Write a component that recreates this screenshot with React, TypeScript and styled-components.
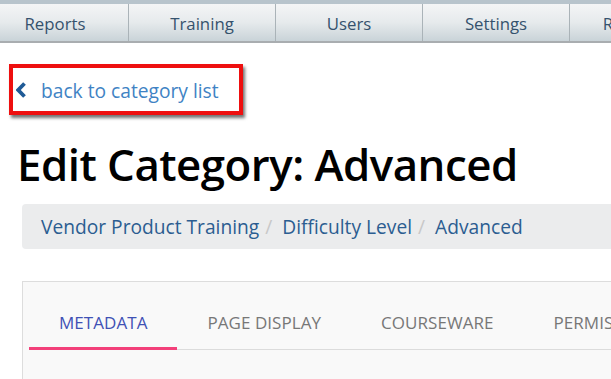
import React from "react";
import styled, { createGlobalStyle } from "styled-components";

const GlobalStyle = createGlobalStyle`
  html, body {
    margin: 0;
    padding: 0;
    background: #ffffff;
    overflow: hidden;
    font-family: "Open Sans", "Noto Sans", sans-serif;
  }
`;

const Page = styled.div`
  width: 611px;
  height: 379px;
  overflow: hidden;
`;

const TopNav = styled.nav`
  display: flex;
  width: 800px;
  margin-left: -18px;
  border-top: 4px solid #b8c4cc;
  border-bottom: 2px solid #a9adb0;
`;

const NavItem = styled.div`
  flex: 0 0 147px;
  height: 37px;
  display: flex;
  align-items: center;
  justify-content: center;
  padding-top: 1px;
  box-sizing: border-box;
  background: linear-gradient(#f4f5f6, #e6eaec 50%, #c9d3d8);
  border-right: 1px solid #aab3b8;
  color: #35526d;
  font-size: 16.8px;
`;

const Content = styled.div`
  padding: 21px 0 0 9px;
`;

const BackBox = styled.div`
  display: inline-flex;
  align-items: center;
  gap: 15px;
  width: 223px;
  height: 43px;
  padding: 0 0 0 3px;
  border: 4px solid #ee0f0f;
  box-shadow: 2px 3px 3px rgba(0, 0, 0, 0.55);
`;

const BackLink = styled.a`
  color: #3f83c4;
  font-size: 19.2px;
  text-decoration: none;
  line-height: 1;
  padding-top: 2px;
`;

const Title = styled.h1`
  margin: 25px 0 0 8px;
  font-size: 43.8px;
  font-weight: 600;
  letter-spacing: -0.5px;
  color: #000;
  line-height: 1.1;
`;

const Breadcrumb = styled.ol`
  display: flex;
  align-items: center;
  list-style: none;
  margin: 16px 0 0 13px;
  padding: 0 0 0 19px;
  width: 700px;
  height: 45px;
  background: #ebeced;
  border-radius: 4px;
  font-size: 19.2px;
`;

const Crumb = styled.li`
  color: #2b5d91;

  & + &::before {
    content: "/";
    color: #c8c8c8;
    padding: 0 10px 0 6px;
  }
`;

const Card = styled.div`
  margin: 32px 0 0 13px;
  width: 700px;
  height: 120px;
  border: 1px solid #dddddd;
  background: #f9f9f9;
  padding: 0 0 0 6px;
`;

const Tabs = styled.div`
  display: flex;
  margin-top: 18px;
  border-bottom: 1px solid #dcdcdc;
`;

const Tab = styled.div<{ $active?: boolean }>`
  padding: 11px 30px 13px 30px;
  font-size: 17px;
  letter-spacing: 0.05px;
  white-space: nowrap;
  color: ${(p) => (p.$active ? "#3f51b5" : "#777777")};
  border-bottom: 3px solid ${(p) => (p.$active ? "#f3407a" : "transparent")};
  margin-bottom: -1px;
`;

const Chevron = () => (
  <svg width="10" height="16" viewBox="0 0 10 16">
    <path d="M8.5 1.5 L2.2 8 L8.5 14.5" fill="none" stroke="#1f5b97" strokeWidth="3.8" />
  </svg>
);

export default function App() {
  return (
    <Page>
      <GlobalStyle />
      <TopNav>
        {["Reports", "Training", "Users", "Settings", "Resources"].map((n) => (
          <NavItem key={n}>{n}</NavItem>
        ))}
      </TopNav>
      <Content>
        <BackBox>
          <Chevron />
          <BackLink href="#">back to category list</BackLink>
        </BackBox>
        <Title>Edit Category: Advanced</Title>
        <Breadcrumb>
          <Crumb>Vendor Product Training</Crumb>
          <Crumb>Difficulty Level</Crumb>
          <Crumb>Advanced</Crumb>
        </Breadcrumb>
        <Card>
          <Tabs>
            <Tab $active>METADATA</Tab>
            <Tab>PAGE DISPLAY</Tab>
            <Tab>COURSEWARE</Tab>
            <Tab>PERMISSIONS</Tab>
          </Tabs>
        </Card>
      </Content>
    </Page>
  );
}
